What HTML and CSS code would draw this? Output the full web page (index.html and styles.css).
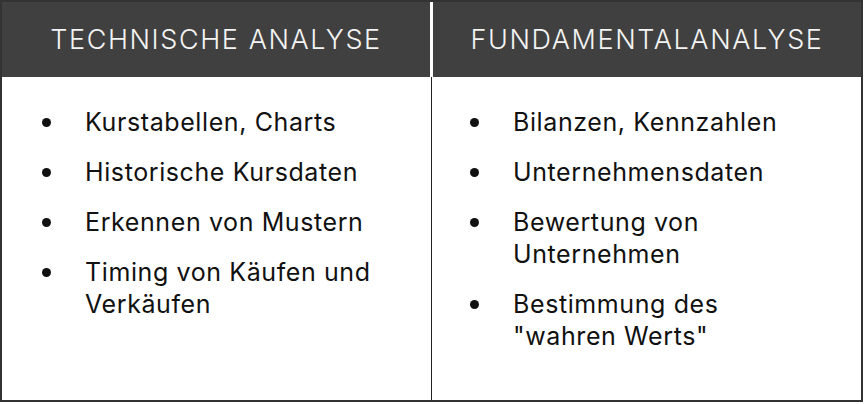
FILE: index.html
```html
<!DOCTYPE html>
<html lang="de">
<head>
<meta charset="utf-8">
<link rel="stylesheet" href="styles.css">
</head>
<body>
<div class="table">
  <div class="head-row">
    <div class="head">TECHNISCHE ANALYSE</div>
    <div class="head">FUNDAMENTALANALYSE</div>
  </div>
  <div class="body-row">
    <div class="cell left">
      <ul class="list">
        <li>Kurstabellen, Charts</li>
        <li>Historische Kursdaten</li>
        <li>Erkennen von Mustern</li>
        <li>Timing von Käufen und Verkäufen</li>
      </ul>
    </div>
    <div class="cell right">
      <ul class="list">
        <li>Bilanzen, Kennzahlen</li>
        <li>Unternehmensdaten</li>
        <li>Bewertung von Unternehmen</li>
        <li>Bestimmung des "wahren Werts"</li>
      </ul>
    </div>
  </div>
</div>
</body>
</html>
```

FILE: styles.css
```css
html, body {
  margin: 0;
  padding: 0;
  background: #ffffff;
}
body {
  font-family: Inter, "Liberation Sans", sans-serif;
}
.table {
  box-sizing: border-box;
  width: 863px;
  height: 402px;
  border: 2px solid #333333;
  display: flex;
  flex-direction: column;
}
.head-row {
  display: flex;
  gap: 3px;
  height: 75px;
  background: #ffffff;
}
.head {
  flex: 1;
  background: #404040;
  color: #f4f4f4;
  font-size: 27px;
  font-weight: 300;
  letter-spacing: 1.6px;
  display: flex;
  align-items: center;
  justify-content: center;
  padding-bottom: 1px;
}
.body-row {
  flex: 1;
  display: flex;
}
.cell {
  box-sizing: border-box;
  padding-top: 29px;
}
.left {
  width: 430px;
  border-right: 1px solid #222222;
  padding-left: 37px;
  padding-right: 20px;
}
.right {
  flex: 1;
  padding-left: 35px;
  padding-right: 50px;
}
.list {
  list-style: none;
  margin: 0;
  padding: 0;
  font-size: 25px;
  letter-spacing: 0.6px;
  line-height: 32px;
  color: #111111;
}
.list li {
  position: relative;
  padding-left: 46px;
  margin-bottom: 18px;
}
.list li::before {
  content: "";
  position: absolute;
  left: 3px;
  top: 12px;
  width: 9px;
  height: 9px;
  border-radius: 50%;
  background: #111111;
}
```
